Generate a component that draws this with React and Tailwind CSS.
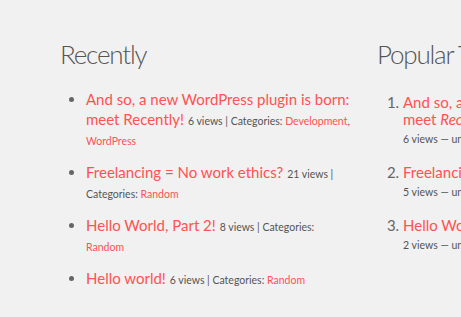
const recent = [
  {
    title: 'And so, a new WordPress plugin is born: meet Recently!',
    views: 6,
    cats: ['Development', 'WordPress'],
  },
  { title: 'Freelancing = No work ethics?', views: 21, cats: ['Random'] },
  { title: 'Hello World, Part 2!', views: 8, cats: ['Random'] },
  { title: 'Hello world!', views: 6, cats: ['Random'] },
];

const popular = [
  {
    title: (
      <>
        And so, a new WordPress plugin is born: meet <em>Recently</em>!
      </>
    ),
    meta: '6 views — under Development, WordPress',
  },
  { title: 'Freelancing = No work ethics?', meta: '5 views — under Random' },
  { title: 'Hello World, Part 2!', meta: '2 views — under Random' },
];

export default function App() {
  return (
    <div className="h-[317px] w-full overflow-hidden bg-[#f1f1f1] font-['Lato',sans-serif] text-[#555]">
      <div className="flex pl-[60px] pt-[37px]">
        <section className="w-[317px] shrink-0">
          <h2 className="text-[26px] font-light leading-[34px] tracking-[-1.2px] text-[#555]">Recently</h2>
          <ul className="mt-[18px] w-[292px] list-disc pl-[26px] text-[15px] leading-[20px] marker:text-[#666]">
            {recent.map((post) => (
              <li key={post.title} className="mb-[13px]">
                <a href="#" className="text-[#ff5252]">
                  {post.title}
                </a>{' '}
                <span className="text-[10.5px] leading-none text-[#555]">
                  {post.views} views | Categories:{' '}
                  {post.cats.map((cat, i) => (
                    <span key={cat}>
                      <a href="#" className="text-[#ff5252]">
                        {cat}
                      </a>
                      {i < post.cats.length - 1 ? ', ' : ''}
                    </span>
                  ))}
                </span>
              </li>
            ))}
          </ul>
        </section>

        <section className="w-[300px] shrink-0">
          <h2 className="whitespace-nowrap text-[26px] font-light leading-[34px] tracking-[-1.2px] text-[#555]">
            Popular Today
          </h2>
          <ol className="mt-[20px] list-decimal pl-[26px] text-[15px] marker:text-[#666]">
            {popular.map((post) => (
              <li key={post.meta} className="mb-[13px]">
                <a href="#" className="block leading-[17px] text-[#ff5252]">
                  {post.title}
                </a>
                <div className="mt-[2px] text-[10.5px] leading-[18px] text-[#555]">{post.meta}</div>
              </li>
            ))}
          </ol>
        </section>
      </div>
    </div>
  );
}
